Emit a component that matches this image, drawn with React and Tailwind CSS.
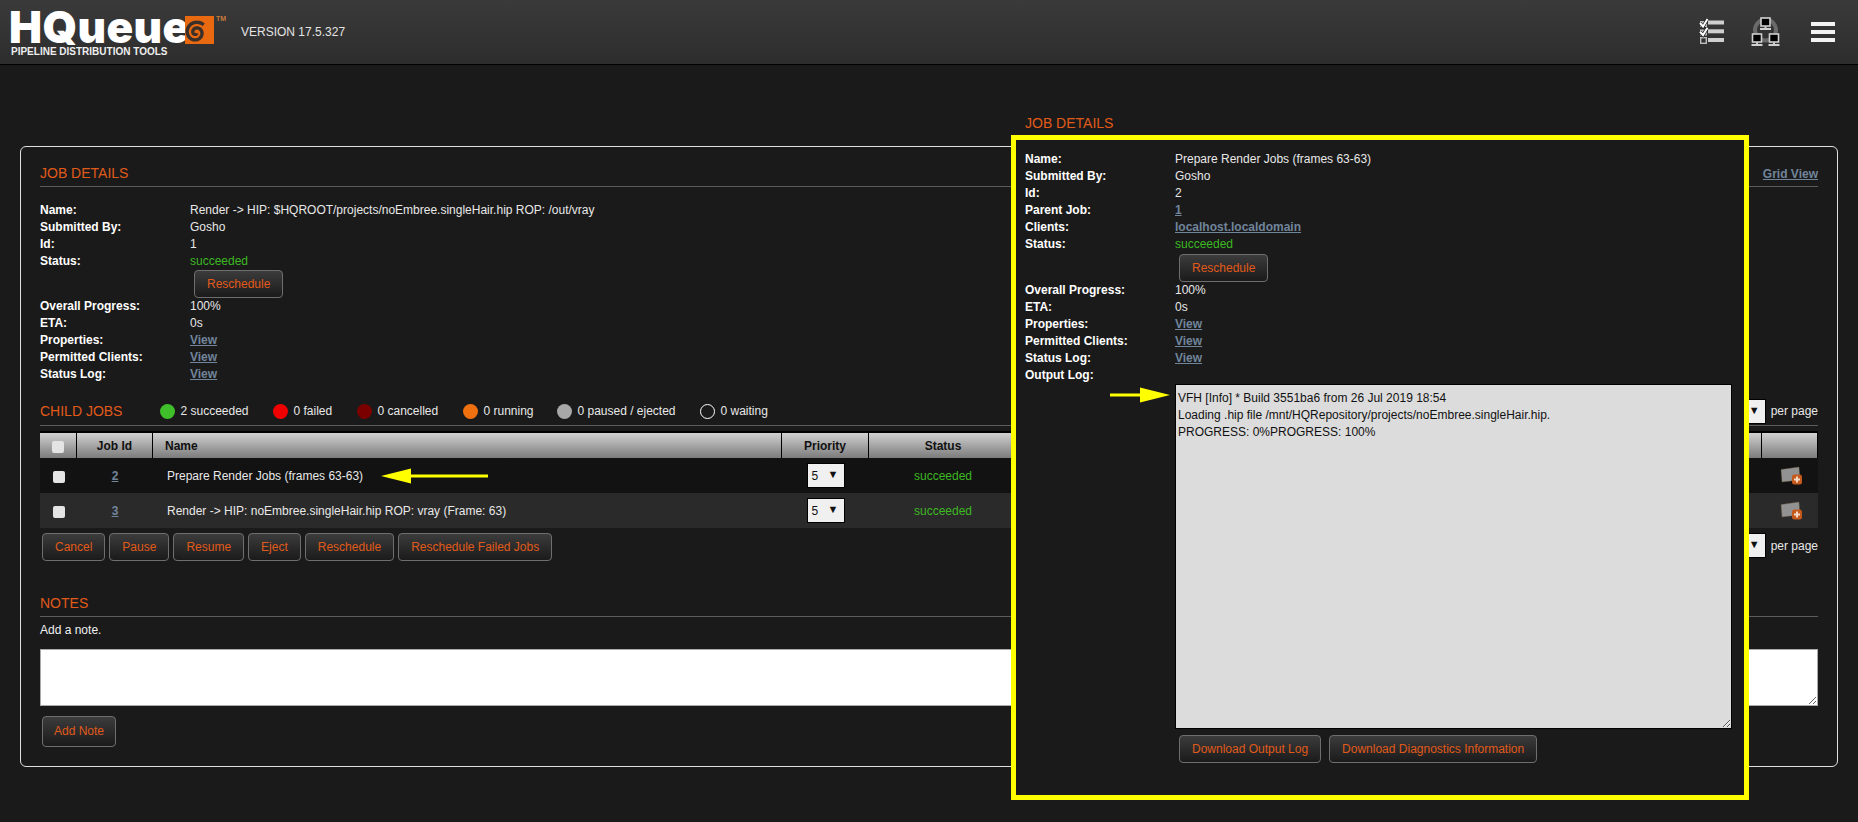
const Btn = ({ className = "", children }) => (
  <button className={"h-[28px] px-[12px] rounded-[4px] border border-[#6e6e6e] bg-gradient-to-b from-[#3c3c3c] to-[#1b1b1b] text-[#e05a1a] text-[12px] leading-none whitespace-nowrap " + className}>
    {children}
  </button>
);

const Heading = ({ children }) => <span className="block text-[14px] leading-[16px] text-[#e05a1a] uppercase">{children}</span>;

const Link = ({ children }) => <a href="#" className="font-bold underline text-[#71859b]">{children}</a>;

const Row = ({ label, width, children }) => (
  <div className="flex h-[17px] leading-[17px]">
    <div className={"font-bold shrink-0 " + width}>{label}</div>
    <div className="text-[#e8e8e8]">{children}</div>
  </div>
);

const Dot = ({ color, label, className = "" }) => (
  <div className={"flex items-center gap-[5px] " + className}>
    <span className={"w-[15px] h-[15px] rounded-full shrink-0 " + color} />
    <span className="text-[#e8e8e8]">{label}</span>
  </div>
);

const Sel = ({ className = "", value }) => (
  <div className={"flex items-center justify-between pl-[4px] pr-[5px] bg-[#f0f0f0] border border-black text-[#111] text-[12px] " + className}>
    <span>{value}</span>
    <span className="text-[11px] leading-none mb-[2px]">▼</span>
  </div>
);

const Check = () => <input type="checkbox" className="appearance-none block mt-[2px] w-[12px] h-[12px] rounded-[2px] bg-[#e4e4e4]" />;

const Arrow = ({ left, className = "" }) => (
  <svg width="110" height="16" viewBox="0 0 110 16" className={"absolute " + className}>
    {left ? (
      <path d="M0 8 L30 0.5 V6.5 H107 V9.5 H30 V15.5 Z" fill="#ffff00" />
    ) : (
      <path d="M60 8 L30 0.5 V6.5 H0 V9.5 H30 V15.5 Z" fill="#ffff00" />
    )}
  </svg>
);

const AddIcon = () => (
  <svg width="22" height="20" viewBox="0 0 22 20">
    <path d="M1 3.5 L19 1 L20 14 L2 16 Z" fill="#929292" stroke="#6b5a3a" strokeWidth="0.4" />
    <rect x="12" y="8.5" width="10" height="10" rx="2.5" fill="#c4591c" />
    <path d="M17 10.5v6M14 13.5h6" stroke="#f3d9c6" strokeWidth="2" />
  </svg>
);

function spiral() {
  let d = "";
  for (let i = 0; i <= 110; i++) {
    const t = (i / 110) * 11;
    const r = 1 + t * 0.9;
    const x = 11 + r * Math.cos(t - 5.5);
    const y = 16.5 + r * Math.sin(t - 5.5);
    d += (i ? "L" : "M") + x.toFixed(2) + " " + y.toFixed(2);
  }
  return d;
}

const Logo = () => (
  <div className="relative w-[200px] h-[64px] shrink-0">
    <span className="absolute left-[9px] top-[10px] text-[44px] leading-[34px] font-black tracking-[0.4px] text-white font-['Inter',sans-serif]">HQueue</span>
    <svg width="29" height="28" viewBox="0 0 29 28" className="absolute left-[185px] top-[16px] overflow-visible">
      <rect width="29" height="28" fill="#e8690f" />
      <path d={spiral()} fill="none" stroke="#3b3029" strokeWidth="3.4" />
    </svg>
    <span className="absolute left-[216px] top-[15px] text-[7px] leading-[8px] font-bold text-[#c87a3a]">TM</span>
    <span className="absolute left-[11px] top-[46px] text-[10px] leading-[12px] font-bold text-[#eeeeee] whitespace-nowrap">PIPELINE DISTRIBUTION TOOLS</span>
  </div>
);

const ChecklistIcon = () => (
  <svg width="26" height="26" viewBox="0 0 26 26" className="overflow-visible">
    <rect x="2.7" y="18.7" width="5.6" height="5.6" fill="none" stroke="#bdbdbd" strokeWidth="1.4" />
    <rect x="2" y="2" width="7" height="6" fill="#bdbdbd" />
    <rect x="2" y="10.5" width="7" height="6" fill="#bdbdbd" />
    <path d="M2 4 L5 7.5 L9.5 0M2 12.8 L5 16 L9.5 8.8" fill="none" stroke="#1c1c1c" strokeWidth="3.4" />
    <path d="M2 4 L5 7.5 L9.5 0M2 12.8 L5 16 L9.5 8.8" fill="none" stroke="#fff" strokeWidth="2" />
    <rect x="10" y="1.5" width="16" height="4" fill="#cfcfcf" />
    <rect x="10" y="10.3" width="16" height="4" fill="#cfcfcf" />
    <rect x="10" y="19" width="16" height="4" fill="#cfcfcf" />
  </svg>
);

const Pc = ({ x, y }) => (
  <g transform={`translate(${x} ${y})`}>
    <rect x="0" y="0" width="9" height="8" fill="#000" stroke="#d0d0d0" strokeWidth="1.6" />
    <rect x="3.5" y="8.5" width="2" height="1.5" fill="#d0d0d0" />
    <rect x="-1" y="10" width="11" height="2" fill="#d0d0d0" />
  </g>
);

const NetworkIcon = () => (
  <svg width="30" height="30" viewBox="0 0 30 30" className="overflow-visible">
    <circle cx="16.5" cy="13" r="10.5" fill="none" stroke="#6a6a6a" strokeWidth="4" />
    <Pc x={12} y={1} />
    <Pc x={3.5} y={17} />
    <Pc x={20.5} y={17} />
  </svg>
);

const App = () => (
  <div className="relative w-[1858px] h-[822px] overflow-hidden bg-[#1a1a1a] text-white text-[12px] font-['Liberation_Sans',Arial,sans-serif]">
    <header className="flex items-center h-[65px] border-b border-black bg-gradient-to-b from-[#3a3a3a] to-[#2d2d2d]">
      <Logo />
      <span className="ml-[41px] text-[12px] text-[#e4e4e4] mb-[1px]">VERSION 17.5.327</span>
      <div className="ml-auto flex items-center mr-[23px]">
        <ChecklistIcon />
        <div className="ml-[25px]"><NetworkIcon /></div>
        <div className="ml-[32px] flex flex-col gap-[4px] w-[24px]">
          <span className="h-[4px] bg-[#f2f2f2]" />
          <span className="h-[4px] bg-[#f2f2f2]" />
          <span className="h-[4px] bg-[#f2f2f2]" />
        </div>
      </div>
    </header>

    <main className="mt-[81px] ml-[20px] w-[1818px] border border-[#e0e0e0] rounded-[6px] px-[19px] pt-[18px] pb-[19px]">
      <div className="flex justify-between h-[22px] border-b border-[#5c5c5c]">
        <Heading>Job Details</Heading>
        <Link>Grid View</Link>
      </div>
      <div className="mt-[15px]">
        <Row label="Name:" width="w-[150px]">Render -&gt; HIP: $HQROOT/projects/noEmbree.singleHair.hip ROP: /out/vray</Row>
        <Row label="Submitted By:" width="w-[150px]">Gosho</Row>
        <Row label="Id:" width="w-[150px]">1</Row>
        <Row label="Status:" width="w-[150px]"><span className="text-[#3db822]">succeeded</span></Row>
        <div className="pl-[154px] h-[28px]"><Btn>Reschedule</Btn></div>
        <Row label="Overall Progress:" width="w-[150px]">100%</Row>
        <Row label="ETA:" width="w-[150px]">0s</Row>
        <Row label="Properties:" width="w-[150px]"><Link>View</Link></Row>
        <Row label="Permitted Clients:" width="w-[150px]"><Link>View</Link></Row>
        <Row label="Status Log:" width="w-[150px]"><Link>View</Link></Row>
      </div>

      <div className="mt-[16px] flex items-center border-b border-[#5c5c5c] pb-[2px] h-[27px]">
        <Heading>Child Jobs</Heading>
        <div className="flex items-center ml-[38px]">
          <Dot color="bg-[#3fc02a]" label="2 succeeded" className="w-[113px]" />
          <Dot color="bg-[#f00000]" label="0 failed" className="w-[84px]" />
          <Dot color="bg-[#7a0000]" label="0 cancelled" className="w-[106px]" />
          <Dot color="bg-[#f07010]" label="0 running" className="w-[94px]" />
          <Dot color="bg-[#a8a8a8]" label="0 paused / ejected" className="w-[143px]" />
          <Dot color="border border-white" label="0 waiting" />
        </div>
        <div className="ml-auto flex items-center gap-[5px]">
          <Sel className="w-[40px] h-[25px]" value="25" />
          <span className="text-[#e8e8e8]">per page</span>
        </div>
      </div>

      <div className="mt-[5px]">
        <div className="flex h-[27px] border-t-2 border-r border-black bg-gradient-to-b from-[#d2d2d2] to-[#7c7c7c] text-[#111] font-bold">
          <div className="w-[37px] flex items-center justify-center border-r border-black"><Check /></div>
          <div className="w-[76px] flex items-center justify-center border-r border-black">Job Id</div>
          <div className="w-[629px] flex items-center pl-[12px] border-r border-black">Name</div>
          <div className="w-[87px] flex items-center justify-center border-r border-black">Priority</div>
          <div className="w-[148px] flex items-center justify-center">Status</div>
          <div className="flex-1 border-r border-black" />
          <div className="w-[55px]" />
        </div>
        {[
          { id: 2, name: "Prepare Render Jobs (frames 63-63)", bg: "bg-[#121212]", arrow: true },
          { id: 3, name: "Render -> HIP: noEmbree.singleHair.hip ROP: vray (Frame: 63)", bg: "bg-[#2a2a2a]" },
        ].map((r) => (
          <div key={r.id} className={"flex items-center h-[35px] text-[#e8e8e8] " + r.bg}>
            <div className="w-[37px] flex justify-center"><Check /></div>
            <div className="w-[76px] text-center"><Link>{r.id}</Link></div>
            <div className="relative w-[629px] pl-[14px]">
              {r.name}
              {r.arrow && <Arrow left className="left-[228px] top-[1px]" />}
            </div>
            <div className="w-[87px] flex justify-center"><Sel className="w-[38px] h-[25px]" value="5" /></div>
            <div className="w-[148px] text-center text-[#3db822]">succeeded</div>
            <div className="flex-1" />
            <div className="w-[55px] pl-[17px] pt-[1px]"><AddIcon /></div>
          </div>
        ))}
      </div>

      <div className="mt-[5px] flex items-start justify-between">
        <div className="ml-[2px] flex gap-[4px]">
          <Btn>Cancel</Btn>
          <Btn>Pause</Btn>
          <Btn>Resume</Btn>
          <Btn>Eject</Btn>
          <Btn>Reschedule</Btn>
          <Btn>Reschedule Failed Jobs</Btn>
        </div>
        <div className="flex items-center gap-[5px]">
          <Sel className="w-[40px] h-[25px]" value="25" />
          <span className="text-[#e8e8e8]">per page</span>
        </div>
      </div>

      <div className="mt-[34px] h-[22px] border-b border-[#5c5c5c]"><Heading>Notes</Heading></div>
      <div className="mt-[5px] leading-[17px] text-[#f0f0f0]">Add a note.</div>
      <textarea className="block mt-[10px] w-full h-[57px] bg-white border border-[#aaaaaa] resize outline-none" />
      <Btn className="block mt-[10px] ml-[2px] !h-[31px] !px-[11px] pb-[2px]">Add Note</Btn>
    </main>

    <aside className="absolute left-[1011px] top-[115px] w-[738px]">
      <div className="pl-[14px] h-[20px]"><Heading>Job Details</Heading></div>
      <div className="relative h-[665px] border-[5px] border-[#ffff00] bg-[#1a1a1a] pl-[9px] pt-[11px]">
        <Row label="Name:" width="w-[150px]">Prepare Render Jobs (frames 63-63)</Row>
        <Row label="Submitted By:" width="w-[150px]">Gosho</Row>
        <Row label="Id:" width="w-[150px]">2</Row>
        <Row label="Parent Job:" width="w-[150px]"><Link>1</Link></Row>
        <Row label="Clients:" width="w-[150px]"><Link>localhost.localdomain</Link></Row>
        <Row label="Status:" width="w-[150px]"><span className="text-[#3db822]">succeeded</span></Row>
        <div className="pl-[154px] pt-[1px]"><Btn className="block">Reschedule</Btn></div>
        <Row label="Overall Progress:" width="w-[150px]">100%</Row>
        <Row label="ETA:" width="w-[150px]">0s</Row>
        <Row label="Properties:" width="w-[150px]"><Link>View</Link></Row>
        <Row label="Permitted Clients:" width="w-[150px]"><Link>View</Link></Row>
        <Row label="Status Log:" width="w-[150px]"><Link>View</Link></Row>
        <Row label="Output Log:" width="w-[150px]" />
        <textarea
          readOnly
          className="block ml-[150px] w-[557px] h-[345px] bg-[#dcdcdc] border border-black text-[#111] text-[12px] leading-[17px] pl-[2px] pt-[5px] resize outline-none"
          value={"VFH [Info] * Build 3551ba6 from 26 Jul 2019 18:54\nLoading .hip file /mnt/HQRepository/projects/noEmbree.singleHair.hip.\nPROGRESS: 0%PROGRESS: 100%"}
        />
        <div className="mt-[6px] ml-[154px] flex gap-[8px]">
          <Btn>Download Output Log</Btn>
          <Btn>Download Diagnostics Information</Btn>
        </div>
        <Arrow className="left-[94px] top-[247px]" />
      </div>
    </aside>
  </div>
);

export default App;
